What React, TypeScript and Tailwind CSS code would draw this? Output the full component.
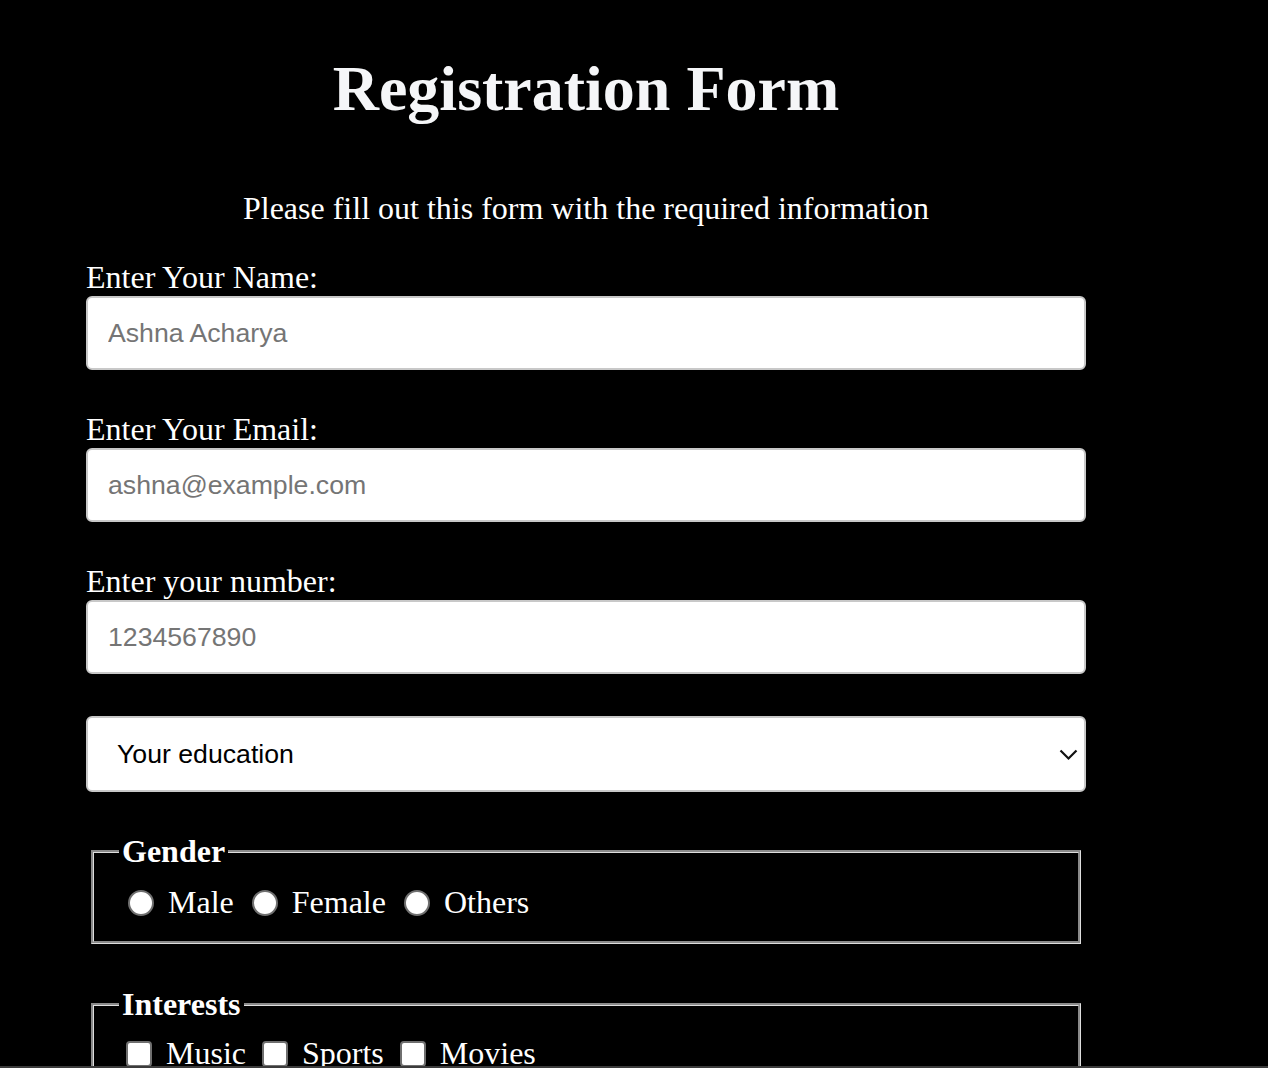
import React from "react";

// Text field with a label above it
function TextField({ label, placeholder, type = "text", className = "" }: { label: string; placeholder: string; type?: string; className?: string }) {
  return (
    <div className={className}>
      <label className="block text-[32px] leading-[37px]">{label}</label>
      <input
        type={type}
        placeholder={placeholder}
        className="block h-[74px] w-full rounded-[6px] border-2 border-[#c8c8c8] bg-white px-[20px] font-['Liberation_Sans',Arial,sans-serif] text-[26.67px] text-black outline-none placeholder:text-[#757575]"
      />
    </div>
  );
}

function Radio({ name, label, first = false }: { name: string; label: string; first?: boolean }) {
  return (
    <label className={first ? "flex items-center" : "ml-[18px] flex items-center"}>
      <input
        type="radio"
        name={name}
        className="mr-[14px] h-[26px] w-[26px] appearance-none rounded-full border-2 border-[#6f6f6f] bg-white"
      />
      <span>{label}</span>
    </label>
  );
}

function Check({ label, first = false }: { label: string; first?: boolean }) {
  return (
    <label className={first ? "flex items-center" : "ml-[16px] flex items-center"}>
      <input
        type="checkbox"
        className="mr-[14px] h-[26px] w-[26px] appearance-none rounded-[4px] border-2 border-[#6f6f6f] bg-white"
      />
      <span>{label}</span>
    </label>
  );
}

export default function App() {
  return (
    <div className="relative h-[1068px] overflow-hidden bg-black font-['Liberation_Serif','Times_New_Roman',serif] text-white">
      <div className="ml-[86px] w-[1000px] pt-[53px]">
        <h1 className="text-center text-[64px] font-bold leading-[71px] text-[#f5f6f8]">Registration Form</h1>
        <p className="mt-[66px] text-center text-[32px] leading-[36px]">
          Please fill out this form with the required information
        </p>

        <TextField className="mt-[33px]" label="Enter Your Name:" placeholder="Ashna Acharya" />
        <TextField className="mt-[41px]" label="Enter Your Email:" placeholder="ashna@example.com" type="email" />
        <TextField className="mt-[41px]" label="Enter your number:" placeholder="1234567890" type="tel" />

        {/* Education dropdown */}
        <div className="relative mt-[42px]">
          <select
            defaultValue=""
            className="block h-[76px] w-full appearance-none rounded-[6px] border-2 border-[#c8c8c8] bg-white pl-[29px] font-['Liberation_Sans',Arial,sans-serif] text-[26.67px] text-black outline-none"
          >
            <option value="" disabled>Your education</option>
            <option>High School</option>
            <option>Bachelor's</option>
            <option>Master's</option>
          </select>
          <svg className="pointer-events-none absolute right-[8px] top-[33px] h-[12px] w-[19px]" viewBox="0 0 19 12" fill="none">
            <path d="M1.5 1.5 L9.5 9.5 L17.5 1.5" stroke="#111" strokeWidth="2.2" />
          </svg>
        </div>

        {/* Gender */}
        <fieldset className="mx-[5px] mt-[41px] border-[3px] border-[#dedede] pb-[20px] pl-[25px] [border-style:groove]">
          <legend className="px-[3px] text-[32px] font-bold leading-[37px]">Gender</legend>
          <div className="ml-[9px] mt-[14px] flex h-[37px] items-center text-[32px] leading-[37px]">
            <Radio name="gender" label="Male" first />
            <Radio name="gender" label="Female" />
            <Radio name="gender" label="Others" />
          </div>
        </fieldset>

        {/* Interests */}
        <fieldset className="mx-[5px] mt-[42px] border-[3px] border-[#dedede] pb-[21px] pl-[25px] [border-style:groove]">
          <legend className="px-[3px] text-[32px] font-bold leading-[37px]">Interests</legend>
          <div className="ml-[7px] mt-[12px] flex h-[37px] items-center text-[32px] leading-[37px]">
            <Check label="Music" first />
            <Check label="Sports" />
            <Check label="Movies" />
          </div>
        </fieldset>
      </div>
      <div className="absolute bottom-0 left-0 right-0 h-[2px] bg-[#3c3c3c]" />
    </div>
  );
}
